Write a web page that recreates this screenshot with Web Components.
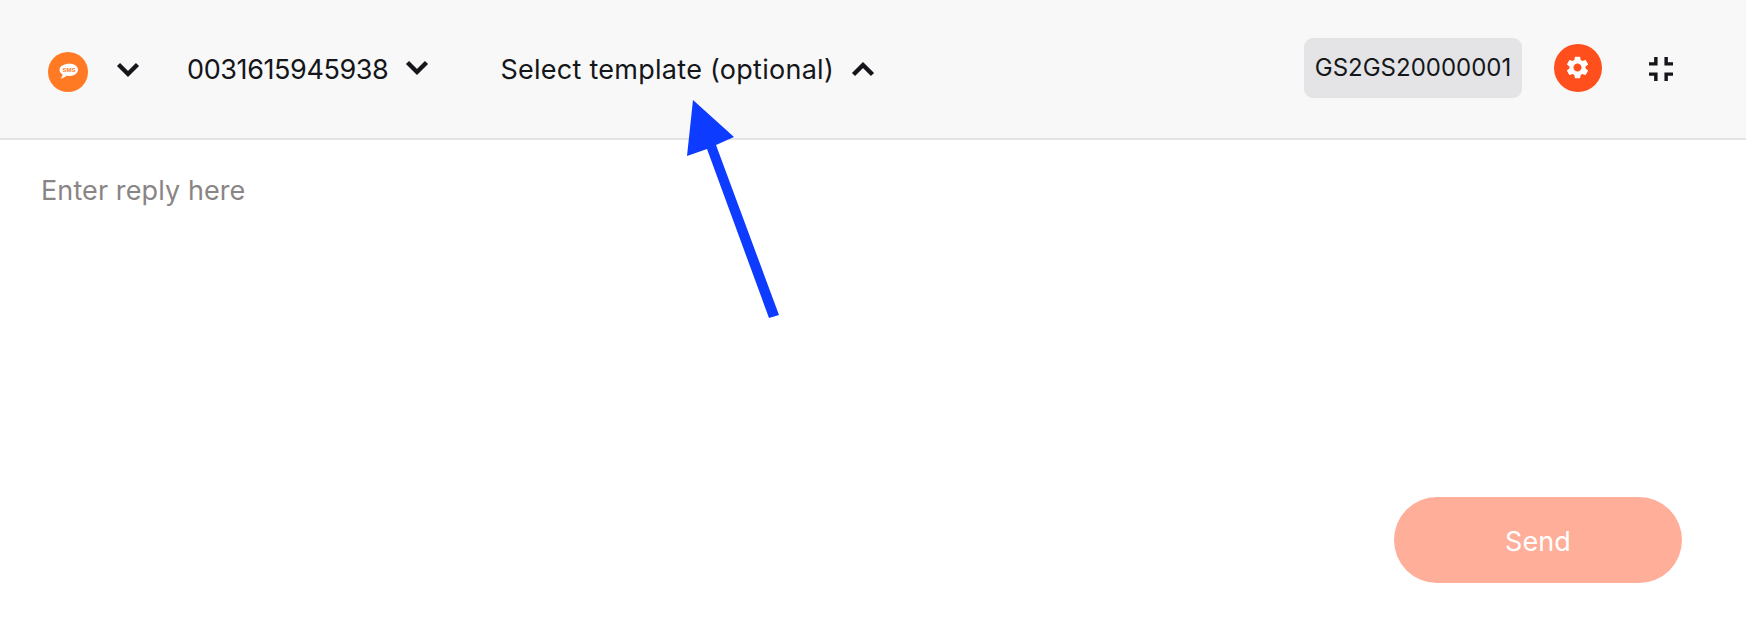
<!DOCTYPE html>
<html>
<head>
<meta charset="utf-8">
<title>Reply composer</title>
<style>
  html, body { margin: 0; background: #fff; }
  body { font-family: Inter, "Liberation Sans", sans-serif; color: #14161a; }
</style>
</head>
<body>
<template id="dropdown-tpl">
  <style>
    :host { display: inline-flex; align-items: center; font-size: 27px; line-height: 32px; white-space: nowrap; }
    svg { display: block; fill: none; stroke: #14161a; stroke-width: 4.4; }
  </style>
  <slot></slot>
  <svg width="26" height="16" viewBox="0 0 26 16"><path d=""></path></svg>
</template>

<script>
const tpl = id => document.getElementById(id).content.cloneNode(true);

class ReplyDropdown extends HTMLElement {
  constructor() {
    super();
    this.attachShadow({mode: "open"});
    this.shadowRoot.appendChild(tpl("dropdown-tpl"));
  }

  connectedCallback() {
    // open dropdowns point the chevron up
    const d = this.hasAttribute("open") ? "M3.5 13.5 13 4l9.5 9.5" : "M3.5 2.500l9.5 9.500 9.500-9.500";
    this.shadowRoot.querySelector("path").setAttribute("d", d);
    const svg = this.shadowRoot.querySelector("svg");
    svg.style.marginLeft = (this.getAttribute("gap") || 16) + "px";
    svg.style.marginTop = (this.getAttribute("lift") || 0) + "px";
  }
}
customElements.define("reply-dropdown", ReplyDropdown);

class SmsBadge extends HTMLElement {
  constructor() {
    super();
    this.attachShadow({mode: "open"});
    this.shadowRoot.innerHTML = `
    <style>
      :host { display: block; width: 40px; height: 40px; }
      svg { display: block; }
      text { font: 700 6px "Liberation Sans", sans-serif; fill: #ff7a22; }
    </style>
    <svg width="40" height="40" viewBox="0 0 40 40">
      <circle cx="20" cy="20" r="20" fill="#ff7a22"></circle>
      <path fill="#fff" d="M21 11.500c5 0 9 2.800 9 6.300s-4 6.300-9 6.300c-1 0-1.800-.1-2.700-.3-1.200 1.500-3 2.500-6 2.700 1.300-.9 2.100-2.100 2.300-3.900-1.800-1.200-3.100-2.900-3.100-4.800 0-3.500 4.500-6 9.500-6z"></path>
      <text x="21" y="20" text-anchor="middle">SMS</text>
    </svg>
    `;
  }
}
customElements.define("sms-badge", SmsBadge);

class SenderPill extends HTMLElement {
  constructor() {
    super();
    this.attachShadow({mode: "open"});
    this.shadowRoot.innerHTML = `
    <style>
      :host { display: flex; align-items: center; justify-content: center; width: 218px; height: 60px; border-radius: 9px; background: #e4e4e6; font-size: 24px; white-space: nowrap; }
    </style>
    <slot></slot>
    `;
  }
}
customElements.define("sender-pill", SenderPill);

class SettingsButton extends HTMLElement {
  constructor() {
    super();
    this.attachShadow({mode: "open"});
    this.shadowRoot.innerHTML = `
    <style>
      :host { display: flex; align-items: center; justify-content: center; width: 48px; height: 48px; border-radius: 50%; background: #ff4f1c; }
      svg { display: block; fill: #fff; margin-right: 2px; }
    </style>
    <svg width="27" height="27" viewBox="0 0 24 24"><path d="M19.14 12.94c.04-.3.06-.61.06-.94 0-.32-.02-.64-.07-.94l2.030-1.580c.18-.14.23-.41.12-.61l-1.920-3.320c-.12-.22-.37-.29-.59-.22l-2.390.96c-.5-.38-1.030-.7-1.620-.94l-.36-2.540c-.04-.24-.24-.41-.48-.41h-3.840c-.24 0-.43.17-.47.41l-.36 2.540c-.59.24-1.130.57-1.620.94l-2.390-.96c-.22-.08-.47 0-.59.22L2.740 8.870c-.12.21-.08.47.12.61l2.030 1.580c-.05.3-.09.63-.09.94s.02.64.07.94l-2.030 1.580c-.18.14-.23.41-.12.61l1.920 3.320c.12.22.37.29.59.22l2.390-.96c.5.38 1.030.7 1.620.94l.36 2.540c.05.24.24.41.48.41h3.840c.24 0 .44-.17.47-.41l.36-2.540c.59-.24 1.130-.56 1.620-.94l2.390.96c.22.08.47 0 .59-.22l1.920-3.320c.12-.22.07-.47-.12-.61l-2.010-1.580zM12 15.600c-1.980 0-3.600-1.620-3.600-3.600s1.620-3.600 3.600-3.600 3.600 1.620 3.600 3.600-1.620 3.600-3.600 3.600z"></path></svg>
    `;
  }
}
customElements.define("settings-button", SettingsButton);

class CollapseButton extends HTMLElement {
  constructor() {
    super();
    this.attachShadow({mode: "open"});
    this.shadowRoot.innerHTML = `
    <style>
      :host { display: block; width: 24px; height: 24px; }
      svg { display: block; fill: #14161a; }
    </style>
    <svg width="24" height="24" viewBox="5 5 14 14"><path d="M5 16h3v3h2v-5H5v2zm3-8H5v2h5V5H8v3zm6 11h2v-3h3v-2h-5v5zm2-11V5h-2v5h5V8h-3z"></path></svg>
    `;
  }
}
customElements.define("collapse-button", CollapseButton);

class ReplyHeader extends HTMLElement {
  constructor() {
    super();
    this.attachShadow({mode: "open"});
    this.shadowRoot.innerHTML = `
    <style>
      :host { display: flex; align-items: center; box-sizing: border-box; height: 140px; padding: 0 73px 0 48px; background: #f8f8f8; border-bottom: 2px solid #e4e4e4; }
      .spacer { flex: 1; }
      ::slotted(sms-badge) { margin-top: 5px; }
      ::slotted(.channel) { margin-left: 27px; margin-top: 1px; }
      ::slotted(.number) { margin-left: 46px; margin-top: 2px; letter-spacing: -0.4px; }
      ::slotted(.template) { margin-left: 70px; margin-top: 2px; letter-spacing: 0.27px; }
      ::slotted(sender-pill) { margin-top: -3px; }
      ::slotted(settings-button) { margin-left: 32px; margin-top: -3px; }
      ::slotted(collapse-button) { margin-left: 47px; }
    </style>
    <slot name="left"></slot>
    <div class="spacer"></div>
    <slot name="right"></slot>
    `;
  }
}
customElements.define("reply-header", ReplyHeader);

class ReplyBox extends HTMLElement {
  constructor() {
    super();
    this.attachShadow({mode: "open"});
    this.shadowRoot.innerHTML = `
    <style>
      :host { display: flex; flex-direction: column; box-sizing: border-box; height: 486px; padding: 35px 64px 43px 41px; font-size: 27px; line-height: 32px; letter-spacing: 0.1px; }
      .placeholder { color: #8a8585; flex: 1; }
      .actions { display: flex; justify-content: flex-end; }
    </style>
    <div class="placeholder"><slot name="placeholder"></slot></div>
    <div class="actions"><slot name="actions"></slot></div>
    `;
  }
}
customElements.define("reply-box", ReplyBox);

class SendButton extends HTMLElement {
  constructor() {
    super();
    this.attachShadow({mode: "open"});
    this.shadowRoot.innerHTML = `
    <style>
      :host { display: flex; align-items: center; justify-content: center; box-sizing: border-box; width: 288px; height: 86px; padding-top: 3px; border-radius: 43px; background: #ffae9a; color: #fff; font-size: 27px; font-weight: 400; }
    </style>
    <slot></slot>
    `;
  }
}
customElements.define("send-button", SendButton);

// blue annotation arrow drawn over the header and the reply box
class AnnotationArrow extends HTMLElement {
  constructor() {
    super();
    this.attachShadow({mode: "open"});
    this.shadowRoot.innerHTML = `
    <style>
      :host { position: absolute; left: 680px; top: 95px; width: 105px; height: 230px; }
      svg { display: block; fill: #0d3bff; }
    </style>
    <svg width="105" height="230" viewBox="680 95 105 230">
      <path d="M693 100 734 137 716 145 779 315 769 318 707 149 687 156z"></path>
    </svg>
    `;
  }
}
customElements.define("annotation-arrow", AnnotationArrow);
</script>

<reply-header>
  <sms-badge slot="left"></sms-badge>
  <reply-dropdown slot="left" class="channel" gap="0"></reply-dropdown>
  <reply-dropdown slot="left" class="number" lift="-4">0031615945938</reply-dropdown>
  <reply-dropdown slot="left" class="template" lift="-2" open>Select template (optional)</reply-dropdown>
  <sender-pill slot="right">GS2GS20000001</sender-pill>
  <settings-button slot="right"></settings-button>
  <collapse-button slot="right"></collapse-button>
</reply-header>
<reply-box>
  <span slot="placeholder">Enter reply here</span>
  <send-button slot="actions">Send</send-button>
</reply-box>
<annotation-arrow></annotation-arrow>
</body>
</html>
